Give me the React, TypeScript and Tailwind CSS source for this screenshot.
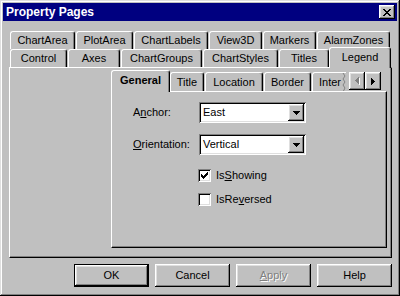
import React from 'react';

const raised =
  'bg-[#c0c0c0] shadow-[inset_-1px_-1px_0_#000,inset_1px_1px_0_#fff,inset_-2px_-2px_0_#808080,inset_2px_2px_0_#dfdfdf]';
const sunken =
  'bg-white shadow-[inset_1px_1px_0_#808080,inset_-1px_-1px_0_#fff,inset_2px_2px_0_#000,inset_-2px_-2px_0_#dfdfdf]';
const tabBase =
  'relative flex items-center justify-center bg-[#c0c0c0] border-l border-t border-r border-l-white border-t-white border-r-black rounded-t-[3px] shadow-[inset_-1px_0_0_#808080] whitespace-nowrap';

const Tab: React.FC<{ label: React.ReactNode; className: string }> = ({ label, className }) => (
  <div className={`${tabBase} ${className}`}>{label}</div>
);

const DownArrow = () => (
  <svg width="7" height="4" viewBox="0 0 7 4" shapeRendering="crispEdges">
    <path d="M0 0h7v1H0zM1 1h5v1H1zM2 2h3v1H2zM3 3h1v1H3z" fill="#000" />
  </svg>
);

const Combo: React.FC<{ value: string }> = ({ value }) => (
  <div className={`${sunken} w-[107px] h-[21px] flex items-center p-[2px]`}>
    <span className="flex-1 pl-[2px] leading-none">{value}</span>
    <div className={`${raised} w-[16px] h-[17px] flex items-center justify-center`}>
      <DownArrow />
    </div>
  </div>
);

const Check: React.FC<{ checked?: boolean; label: React.ReactNode }> = ({ checked, label }) => (
  <div className="flex items-center h-[13px] ml-[65px]">
    <div className={`${sunken} w-[13px] h-[13px] flex items-center justify-center`}>
      {checked && (
        <svg width="7" height="7" viewBox="0 0 7 7" shapeRendering="crispEdges">
          <path
            d="M6 0h1v1H6zM5 1h2v1H5zM0 2h1v1H0zM4 2h3v1H4zM0 3h2v1H0zM3 3h3v1H3zM0 4h5v1H0zM1 5h3v1H1zM2 6h1v1H2z"
            fill="#000"
          />
        </svg>
      )}
    </div>
    <span className="ml-[5px] leading-none">{label}</span>
  </div>
);

const Button: React.FC<{ children: React.ReactNode; primary?: boolean }> = ({ children, primary }) =>
  primary ? (
    <div className="w-[75px] h-[23px] border border-black">
      <div className={`${raised} w-full h-full flex items-center justify-center`}>{children}</div>
    </div>
  ) : (
    <div className={`${raised} w-[75px] h-[23px] flex items-center justify-center`}>{children}</div>
  );

export default function App() {
  return (
    <div className="w-[400px] h-[296px] bg-[#c0c0c0] p-[3px] flex flex-col text-[11px] text-black font-['Liberation_Sans',Arial,sans-serif] shadow-[inset_-1px_-1px_0_#000,inset_1px_1px_0_#dfdfdf,inset_-2px_-2px_0_#808080,inset_2px_2px_0_#fff]">
      {/* title bar */}
      <div className="h-[18px] bg-[#000080] flex items-center pl-[3px] pr-[2px]">
        <span className="text-white font-bold text-[12px] leading-none">Property Pages</span>
        <div className={`${raised} ml-auto w-[16px] h-[14px] flex items-center justify-center`}>
          <svg width="8" height="7" viewBox="0 0 8 7" shapeRendering="crispEdges">
            <path
              d="M0 0h2v1H0zM6 0h2v1H6zM1 1h2v1H1zM5 1h2v1H5zM2 2h4v1H2zM3 3h2v1H3zM2 4h4v1H2zM1 5h2v1H1zM5 5h2v1H5zM0 6h2v1H0zM6 6h2v1H6z"
              fill="#000"
            />
          </svg>
        </div>
      </div>

      <div className="pl-[6px] pr-[5px] mt-[10px] flex flex-col">
        {/* back tab row */}
        <div className="flex gap-[1px] pl-[1px] h-[18px]">
          <Tab className="w-[65px] h-[18px]" label="ChartArea" />
          <Tab className="w-[57px] h-[18px]" label="PlotArea" />
          <Tab className="w-[74px] h-[18px]" label="ChartLabels" />
          <Tab className="w-[53px] h-[18px]" label="View3D" />
          <Tab className="w-[53px] h-[18px]" label="Markers" />
          <Tab className="w-[73px] h-[18px]" label="AlarmZones" />
        </div>
        {/* front tab row */}
        <div className="flex items-start pl-[1px] h-[18px]">
          <Tab className="w-[57px] h-[18px]" label="Control" />
          <Tab className="w-[52px] h-[18px] ml-[1px]" label="Axes" />
          <Tab className="w-[81px] h-[18px] ml-[1px]" label="ChartGroups" />
          <Tab className="w-[75px] h-[18px] ml-[1px]" label="ChartStyles" />
          <Tab className="w-[50px] h-[18px] ml-[1px]" label="Titles" />
          <Tab className="w-[62px] h-[21px] -mt-[2px] z-10 pb-[2px] -mr-[1px]" label="Legend" />
        </div>

        {/* main tab panel */}
        <div className="h-[191px] border border-t-white border-l-white border-r-black border-b-black shadow-[inset_-1px_-1px_0_#808080] pt-[2px] pl-[101px]">
          <div className="w-[276px] flex flex-col">
            <div className="flex items-end h-[21px]">
              <Tab className="w-[59px] h-[22px] -mb-[1px] z-10 font-bold pb-[2px]" label="General" />
              <Tab className="w-[34px] h-[19px]" label="Title" />
              <Tab className="w-[58px] h-[19px] ml-[1px]" label="Location" />
              <Tab className="w-[47px] h-[19px] ml-[1px]" label="Border" />
              <div className="relative w-[34px] h-[19px] ml-[1px] bg-[#c0c0c0] border-l border-t border-l-white border-t-white rounded-tl-[3px] overflow-hidden flex items-center pl-[6px]">
                <span>Inter</span>
                <svg className="absolute right-0 top-0" width="5" height="19" viewBox="0 0 5 19">
                  <path d="M2 0 L4 3 L2 6 L4 9 L2 12 L4 15 L2 19" stroke="#808080" fill="none" />
                  <path d="M3 0 L5 3 L3 6 L5 9 L3 12 L5 15 L3 19 L5 19 L5 0Z" fill="#c0c0c0" />
                </svg>
              </div>
              <div className="flex ml-[3px] mb-[1px]">
                <div className={`${raised} w-[16px] h-[18px] flex items-center justify-center`}>
                  <svg width="5" height="8" viewBox="0 0 5 8" shapeRendering="crispEdges">
                    <path d="M4 1h1v7H4zM3 2h1v5H3zM2 3h1v3H2zM1 4h1v1H1z" fill="#fff" />
                    <path d="M3 0h1v7H3zM2 1h1v5H2zM1 2h1v3H1zM0 3h1v1H0z" fill="#808080" />
                  </svg>
                </div>
                <div className={`${raised} w-[16px] h-[18px] flex items-center justify-center`}>
                  <svg width="4" height="7" viewBox="0 0 4 7" shapeRendering="crispEdges">
                    <path d="M0 0h1v7H0zM1 1h1v5H1zM2 2h1v3H2zM3 3h1v1H3z" fill="#000" />
                  </svg>
                </div>
              </div>
            </div>

            {/* inner panel */}
            <div className="h-[157px] border border-t-white border-l-white border-r-black border-b-black shadow-[inset_-1px_-1px_0_#808080] pt-[10px] pl-[21px] flex flex-col">
              <div className="flex items-center h-[21px]">
                <span className="w-[66px]">
                  A<span className="underline">n</span>chor:
                </span>
                <Combo value="East" />
              </div>
              <div className="flex items-center h-[21px] mt-[11px]">
                <span className="w-[66px]">
                  <span className="underline">O</span>rientation:
                </span>
                <Combo value="Vertical" />
              </div>
              <div className="mt-[14px]">
                <Check
                  checked
                  label={
                    <>
                      Is<span className="underline">S</span>howing
                    </>
                  }
                />
              </div>
              <div className="mt-[11px]">
                <Check
                  label={
                    <>
                      IsRe<span className="underline">v</span>ersed
                    </>
                  }
                />
              </div>
            </div>
          </div>
        </div>

        {/* buttons */}
        <div className="flex justify-end gap-[6px] mt-[6px]">
          <Button primary>OK</Button>
          <Button>Cancel</Button>
          <Button>
            <span className="text-[#808080] [text-shadow:1px_1px_0_#fff]">
              <span className="underline">A</span>pply
            </span>
          </Button>
          <Button>Help</Button>
        </div>
      </div>
    </div>
  );
}
